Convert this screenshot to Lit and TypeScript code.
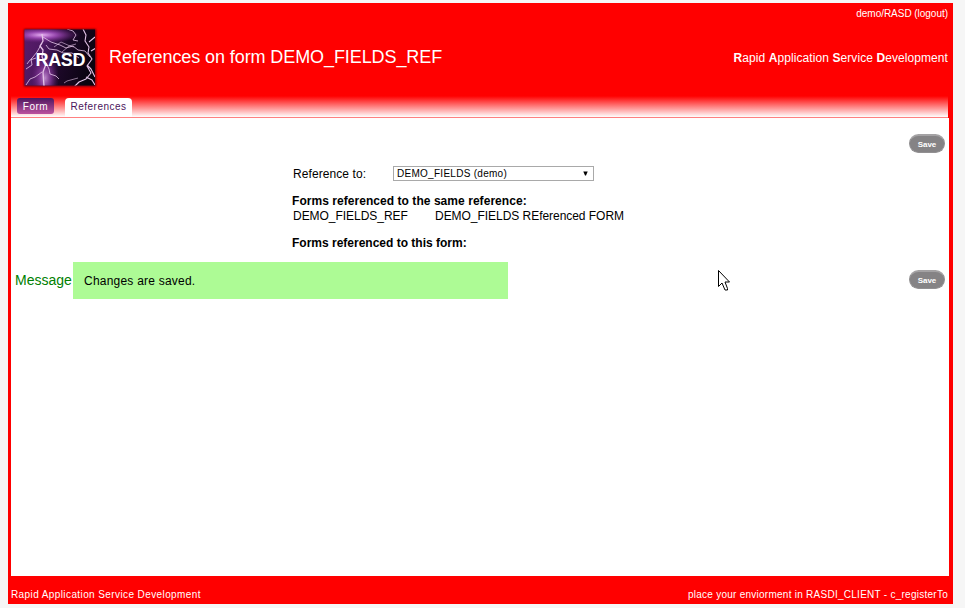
import { LitElement, html, css } from "lit";
import { customElement, property } from "lit/decorators.js";

@customElement("rasd-logo")
class RasdLogo extends LitElement {
  static styles = css`
    :host { display: block; width: 77px; height: 64px; }
    svg { display: block; }
    .word { font: bold 18px "Liberation Sans", Arial, sans-serif; fill: #fff; }
  `;
  render() {
    return html`
      <svg width="77" height="64" viewBox="0 0 77 64">
        <defs>
          <linearGradient id="sky" x1="0" y1="0" x2="1" y2="0.25">
            <stop offset="0" stop-color="#5c1d6c" />
            <stop offset="0.35" stop-color="#4c1860" />
            <stop offset="0.62" stop-color="#1c0828" />
            <stop offset="1" stop-color="#0a0410" />
          </linearGradient>
          <radialGradient id="glow">
            <stop offset="0" stop-color="#e9b0f5" />
            <stop offset="0.4" stop-color="#a850c0" stop-opacity="0.8" />
            <stop offset="1" stop-color="#702080" stop-opacity="0" />
          </radialGradient>
          <filter id="soft" x="-10%" y="-10%" width="120%" height="120%"><feGaussianBlur stdDeviation="1.3" /></filter>
          <filter id="edge" x="-10%" y="-10%" width="120%" height="120%"><feGaussianBlur stdDeviation="0.35" /></filter>
          <clipPath id="frame"><rect x="2.5" y="3.5" width="70.5" height="56" /></clipPath>
        </defs>
        <rect x="2" y="3" width="72" height="57.5" fill="#600010" filter="url(#soft)" />
        <g clip-path="url(#frame)">
          <rect width="77" height="64" fill="url(#sky)" />
          <ellipse cx="20" cy="9" rx="38" ry="8" fill="url(#glow)" />
          <ellipse cx="23" cy="52" rx="14" ry="24" fill="url(#glow)" opacity="0.75" />
          <g fill="none" stroke="#e4c4e8" stroke-linejoin="round" filter="url(#edge)">
            <path stroke-width="1.3" d="M20 8l1 7-3 5 3 4-1 7 4 7-3 8 1 14" />
            <path stroke-width="0.8" d="M20 17l-5 9-4 5-2 2 1 6-6 4M21 11l8 5 9 3 6 3 7-2 5 4 7 1 5 6M24 19l3 4 8 1 6 3 9 0 7 5M24 37l3 6 1 5 6 2 3 3M20 46l-7 5-5 2-4 6M45 3l6 2 3 4-3 5 5 1M14 32l-6 2-3 4" />
            <path stroke-width="1.1" d="M61 3l3 6-1 6 4 6-1 6 4 6-5 7 4 7-5 6-7 3-6 6-5 1M67 16l6-5M69 25l5-3M65 39l4 4 4 8M64 51l6 3 3 5" />
            <path stroke-width="0.6" d="M32 21l7-5 9 4 4 1M40 26l7-6 7-2M56 52l-11 3-3 2" />
          </g>
        </g>
        <text class="word" x="13.5" y="39.5" textLength="50">RASD</text>
      </svg>
    `;
  }
}

@customElement("save-button")
class SaveButton extends LitElement {
  static styles = css`
    :host { display: block; }
    button {
      display: block; box-sizing: border-box; width: 36px; height: 19px; padding: 0;
      border: 1px solid #929092; border-top: 2px solid #a4a2a4; border-radius: 10px;
      background: #858385; color: #fff;
      font: bold 8px/15px "Liberation Sans", Arial, sans-serif; letter-spacing: -0.1px;
    }
  `;
  render() {
    return html`<button type="button">Save</button>`;
  }
}

@customElement("page-tab")
class PageTab extends LitElement {
  @property({ type: Boolean }) active = false;
  static styles = css`
    :host {
      display: block; box-sizing: border-box; width: 37px; height: 16px; margin-top: 2px;
      border-radius: 3px; text-align: center; color: #fff; white-space: nowrap;
      background: linear-gradient(#4f175f, #bd519f);
      font: 10px/18px "Liberation Sans", Arial, sans-serif; letter-spacing: 0.5px;
    }
    :host([active]) {
      width: 67px; height: 19px; border-radius: 4px 4px 0 0; background: #fff; color: #4b145c;
    }
  `;
  render() {
    return html`<slot></slot>`;
  }
}

@customElement("app-root")
class AppRoot extends LitElement {
  static styles = css`
    :host {
      display: block; box-sizing: border-box; height: 608px; padding: 3px 12px 4px 8px;
      background: #f6f6f6; color: #000; font: 12px/15px "Liberation Sans", Arial, sans-serif;
    }
    .page { display: flex; flex-direction: column; height: 601px; background: #f00; white-space: nowrap; }
    .header { box-sizing: border-box; height: 93px; padding: 0 5px 0 14px; display: grid; grid-template-columns: 77px 1fr auto; grid-template-rows: 23px 64px; color: #fff; }
    .user { grid-column: 1 / 4; justify-self: end; font-size: 10px; line-height: 22px; letter-spacing: -0.03px; }
    .title { margin: 0; padding-left: 10px; font-size: 18px; line-height: 62px; font-weight: normal; letter-spacing: -0.09px; }
    .slogan { line-height: 64px; letter-spacing: 0.08px; }
    .tabs {
      box-sizing: border-box; height: 22px; margin: 0 5px 0 3px; padding-left: 6px; display: flex; gap: 11px;
      background: linear-gradient(#f00, #fff); border-bottom: 1px solid #ff8080;
    }
    .content { height: 458px; margin: 0 4px 0 3px; background: #fff; }
    .bar { display: flex; justify-content: flex-end; padding: 16px 4px 0 0; }
    .form { padding: 12px 0 0 281px; }
    .field { display: flex; align-items: center; height: 17px; }
    .label { width: 101px; padding: 1px 0 0 1px; box-sizing: border-box; letter-spacing: 0.08px; }
    .select {
      display: flex; align-items: center; justify-content: space-between; box-sizing: border-box;
      width: 201px; height: 15px; border: 1px solid #a9a9a9; padding: 0 5px 0 3px; font-size: 10px; line-height: 13px;
    }
    .picked { letter-spacing: 0.28px; }
    .heading { font-weight: bold; }
    .same { margin-top: 12px; letter-spacing: 0.05px; }
    .this { margin-top: 12px; }
    .pair { display: flex; padding-left: 1px; letter-spacing: -0.04px; }
    .code { width: 142px; }
    .result { display: flex; align-items: center; height: 37px; margin-top: 11px; padding: 0 4px; }
    .result save-button { margin-bottom: 2px; }
    .caption { width: 58px; color: #008000; font-size: 14px; }
    .note { width: 435px; height: 37px; margin-right: auto; box-sizing: border-box; padding-left: 11px; background: #adfb95; line-height: 38px; letter-spacing: 0.22px; }
    .footer { flex: 1; display: flex; justify-content: space-between; padding: 10px 5px 0 3px; color: #fff; font-size: 10px; line-height: 18px; letter-spacing: 0.4px; }
    .env { letter-spacing: 0.26px; }
    .pointer { position: absolute; left: 717px; top: 269px; }
  `;
  render() {
    return html`
      <div class="page">
        <div class="header">
          <div class="user"><span>demo/RASD (logout)</span></div>
          <rasd-logo></rasd-logo>
          <h1 class="title"><span>References on form DEMO_FIELDS_REF</span></h1>
          <div class="slogan"><b>R</b>apid <b>A</b>pplication <b>S</b>ervice <b>D</b>evelopment</div>
        </div>
        <div class="tabs">
          <page-tab>Form</page-tab>
          <page-tab active>References</page-tab>
        </div>
        <div class="content">
          <div class="bar"><save-button></save-button></div>
          <div class="form">
            <div class="field">
              <span class="label">Reference to:</span>
              <div class="select">
                <span class="picked">DEMO_FIELDS (demo)</span>
                <svg width="5" height="5" viewBox="0 0 5 5"><path d="M0.3 0.5h4.4L3 4.5H2z" fill="#000" /></svg>
              </div>
            </div>
            <div class="heading same">Forms referenced to the same reference:</div>
            <div class="pair"><span class="code">DEMO_FIELDS_REF</span><span class="desc">DEMO_FIELDS REferenced FORM</span></div>
            <div class="heading this">Forms referenced to this form:</div>
          </div>
          <div class="result">
            <span class="caption">Message</span>
            <div class="note">Changes are saved.</div>
            <save-button></save-button>
          </div>
        </div>
        <div class="footer"><span>Rapid Application Service Development</span><span class="env">place your enviorment in RASDI_CLIENT - c_registerTo</span></div>
      </div>
      <svg class="pointer" width="14" height="24" viewBox="0 0 14 24">
        <path d="M1.5 1.5v16l3.5-3.5 3 7h2.5v-1.5l-2.5-6.5h4.5z" fill="#fff" stroke="#000" />
      </svg>
    `;
  }
}
